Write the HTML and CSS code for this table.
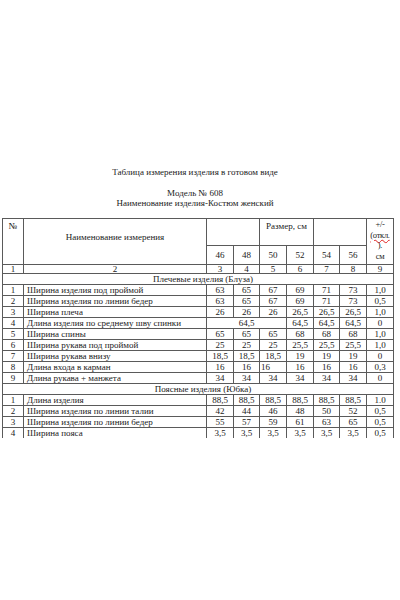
FILE: index.html
```html
<!DOCTYPE html>
<html lang="ru">
<head>
<meta charset="utf-8">
<title>Таблица измерения изделия</title>
<link rel="stylesheet" href="styles.css">
</head>
<body>
<div class="page">
  <p class="title">Таблица измерения изделия в готовом виде</p>
  <p class="model">Модель № 608</p>
  <p class="product">Наименование изделия-Костюм женский</p>
  <table class="sizes">
    <colgroup>
      <col class="c-num"><col class="c-name">
      <col class="c-s1"><col class="c-s2"><col class="c-s1"><col class="c-s1"><col class="c-s2"><col class="c-s1">
      <col class="c-tol">
    </colgroup>
    <tr class="h1">
      <td rowspan="2" class="num-head">№</td>
      <td rowspan="2" class="name-head">Наименование измерения</td>
      <td colspan="2"></td>
      <td colspan="2" class="top">Размер, см</td>
      <td colspan="2"></td>
      <td rowspan="2" class="tol-head">+/-<br><span class="spell">(откл.</span><br>).<br>см</td>
    </tr>
    <tr class="h2">
      <td>46</td><td>48</td><td>50</td><td>52</td><td>54</td><td>56</td>
    </tr>
    <tr class="idx">
      <td>1</td><td>2</td><td>3</td><td>4</td><td>5</td><td>6</td><td>7</td><td>8</td><td>9</td>
    </tr>
    <tr class="section"><td colspan="9">Плечевые изделия (Блуза)</td></tr>
    <tr><td>1</td><td class="name">Ширина изделия под проймой</td><td>63</td><td>65</td><td>67</td><td>69</td><td>71</td><td>73</td><td>1,0</td></tr>
    <tr><td>2</td><td class="name">Ширина изделия по линии бедер</td><td>63</td><td>65</td><td>67</td><td>69</td><td>71</td><td>73</td><td>0,5</td></tr>
    <tr><td>3</td><td class="name">Ширина плеча</td><td>26</td><td>26</td><td>26</td><td>26,5</td><td>26,5</td><td>26,5</td><td>1,0</td></tr>
    <tr><td>4</td><td class="name">Длина изделия по среднему шву спинки</td><td colspan="3">64,5</td><td>64,5</td><td>64,5</td><td>64,5</td><td>0</td></tr>
    <tr><td>5</td><td class="name">Ширина спины</td><td>65</td><td>65</td><td>65</td><td>68</td><td>68</td><td>68</td><td>1,0</td></tr>
    <tr><td>6</td><td class="name">Ширина рукава под проймой</td><td>25</td><td>25</td><td>25</td><td>25,5</td><td>25,5</td><td>25,5</td><td>1,0</td></tr>
    <tr><td>7</td><td class="name">Ширина рукава внизу</td><td>18,5</td><td>18,5</td><td>18,5</td><td>19</td><td>19</td><td>19</td><td>0</td></tr>
    <tr><td>8</td><td class="name">Длина входа в карман</td><td>16</td><td>16</td><td class="left">16</td><td>16</td><td>16</td><td>16</td><td>0,3</td></tr>
    <tr><td>9</td><td class="name">Длина рукава + манжета</td><td>34</td><td>34</td><td>34</td><td>34</td><td>34</td><td>34</td><td>0</td></tr>
    <tr class="section"><td colspan="9">Поясные изделия (Юбка)</td></tr>
    <tr><td>1</td><td class="name">Длина изделия</td><td>88,5</td><td>88,5</td><td>88,5</td><td>88,5</td><td>88,5</td><td>88,5</td><td>1.0</td></tr>
    <tr><td>2</td><td class="name">Ширина изделия по линии талии</td><td>42</td><td>44</td><td>46</td><td>48</td><td>50</td><td>52</td><td>0,5</td></tr>
    <tr><td>3</td><td class="name">Ширина изделия по линии бедер</td><td>55</td><td>57</td><td>59</td><td>61</td><td>63</td><td>65</td><td>0,5</td></tr>
    <tr class="last"><td>4</td><td class="name">Ширина пояса</td><td>3,5</td><td>3,5</td><td>3,5</td><td>3,5</td><td>3,5</td><td>3,5</td><td>0,5</td></tr>
  </table>
</div>
</body>
</html>
```

FILE: styles.css
```css
html, body {
  margin: 0;
  padding: 0;
  background: #ffffff;
}

.page {
  width: 391px;
  padding: 167px 0 0 2px;
  font-family: "Liberation Serif", "Times New Roman", serif;
  font-size: 9px;
  color: #222;
}

.page p {
  margin: 0;
  text-align: center;
  line-height: 10px;
  padding-right: 5px;
}

.title {
  margin-bottom: 11px !important;
}

.product {
  margin-bottom: 10px !important;
}

.sizes {
  width: 391px;
  table-layout: fixed;
  border-collapse: collapse;
  border-top: 1px solid #5a5a5a;
  border-left: 1px solid #5a5a5a;
  border-right: 1px solid #5a5a5a;
}

.c-num { width: 21px; }
.c-name { width: 183px; }
.c-s1 { width: 27px; }
.c-s2 { width: 26px; }
.c-tol { width: 27px; }

.sizes td {
  border: 1px solid #5a5a5a;
  padding: 0;
  height: 10px;
  line-height: 10px;
  text-align: center;
  vertical-align: middle;
  white-space: nowrap;
  overflow: hidden;
}

.sizes .h1 td {
  height: 24px;
  vertical-align: top;
  padding-top: 2px;
}

.sizes .h1 td.name-head {
  vertical-align: middle;
  padding-top: 0;
  padding-bottom: 10px;
}

.sizes .h1 td.tol-head {
  vertical-align: top;
  padding-top: 0;
  font-size: 8.5px;
  line-height: 10.5px;
  letter-spacing: -0.3px;
}

.sizes .h2 td {
  height: 18px;
}

.sizes .idx td {
  height: 8px;
  line-height: 8px;
}

.sizes .section td {
  padding-left: 10px;
}

.sizes td.name {
  text-align: left;
  padding-left: 3px;
}

.sizes td.left {
  text-align: left;
  padding-left: 1px;
}

.sizes tr.last td {
  border-bottom: none;
}

.spell {
  text-decoration: underline wavy #d22;
  text-decoration-thickness: 1px;
}
```
